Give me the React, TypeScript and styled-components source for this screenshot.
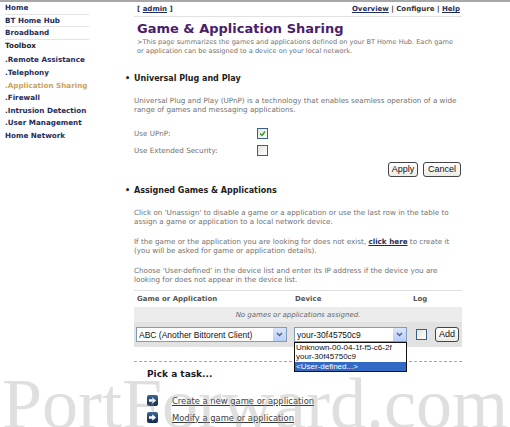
import React from 'react';
import styled, { createGlobalStyle } from 'styled-components';

const GlobalStyle = createGlobalStyle`
  html, body {
    margin: 0;
    padding: 0;
    background: #fff;
  }
  body {
    font-family: "DejaVu Sans", Verdana, sans-serif;
  }
`;

const Page = styled.div`
  position: relative;
  width: 510px;
  height: 427px;
  overflow: hidden;
  border-top: 2px solid #a8a8a8;
  box-sizing: border-box;
  display: flex;
  align-items: flex-start;
`;

const Sidebar = styled.nav`
  width: 84px;
  margin-left: 5px;
  display: flex;
  flex-direction: column;
`;

const NavItem = styled.a<{ $tone?: 'nav' | 'head' | 'active'; $line?: boolean; $gap?: number }>`
  display: block;
  height: 12.6px;
  line-height: 11px;
  margin-top: ${(p) => p.$gap ?? 0}px;
  font-size: 7.2px;
  font-weight: bold;
  white-space: nowrap;
  text-decoration: none;
  color: ${(p) => (p.$tone === 'active' ? '#c9a45c' : p.$tone === 'head' ? '#1c1c1c' : '#1f2d5c')};
  border-bottom: 1px solid ${(p) => (p.$line ? '#e4e4e4' : 'transparent')};
  box-sizing: border-box;
`;

const Main = styled.main`
  width: 328px;
  margin-left: 45px;
  display: flex;
  flex-direction: column;
`;

const TopBar = styled.div`
  height: 14px;
  display: flex;
  justify-content: space-between;
  align-items: center;
  padding: 0 2px 0 3px;
  border-bottom: 1px solid #e2e2e2;
  font-size: 7px;
  font-weight: bold;
  color: #333;
`;

const TopLink = styled.a`
  color: #1f2d5c;
  text-decoration: underline;
`;

const Title = styled.h1`
  margin: 3px 0 0 3px;
  font-size: 13px;
  line-height: 17px;
  font-weight: bold;
  color: #4b1c6c;
`;

const Text = styled.p<{ $top?: number; $indent?: number; $size?: number }>`
  margin: ${(p) => p.$top ?? 0}px 0 0 ${(p) => p.$indent ?? 0}px;
  font-size: ${(p) => p.$size ?? 7.2}px;
  line-height: 9px;
  color: #707070;
`;

const InlineLink = styled.a`
  color: #1f2d5c;
  font-weight: bold;
  text-decoration: underline;
`;

const SectionTitle = styled.h2<{ $top: number }>`
  margin: ${(p) => p.$top}px 0 0 0;
  display: flex;
  align-items: center;
  font-size: 8px;
  line-height: 10px;
  font-weight: bold;
  color: #222;
`;

const Bullet = styled.span`
  width: 9px;
  margin-left: -9px;
  font-size: 8px;
`;

const Form = styled.div`
  margin-top: 11px;
`;

const FormRow = styled.div`
  height: 17px;
  display: grid;
  grid-template-columns: 123px 1fr;
  align-items: center;
  font-size: 7.2px;
  color: #707070;
`;

const Check = styled.span`
  width: 9px;
  height: 9px;
  border: 1px solid #3a5f8a;
  background: linear-gradient(135deg, #e4e4dc, #fff);
  display: inline-flex;
  align-items: center;
  justify-content: center;
`;

const ButtonRow = styled.div<{ $top?: number }>`
  margin-top: ${(p) => p.$top ?? 0}px;
  display: flex;
  justify-content: flex-end;
  gap: 5px;
  padding-right: 1px;
`;

const Button = styled.button<{ $w: number }>`
  width: ${(p) => p.$w}px;
  height: 15px;
  padding: 0;
  border: 1px solid #444;
  border-radius: 3px;
  background: linear-gradient(#fff, #ecebe6);
  font-family: "Liberation Sans", Arial, sans-serif;
  font-size: 9px;
  color: #111;
  line-height: 13px;
`;

const Table = styled.div`
  margin-top: 6px;
  border-top: 1px solid #e0e0e0;
  display: grid;
  grid-template-columns: 158px 118px 1fr;
`;

const HeadCell = styled.div`
  height: 16px;
  display: flex;
  align-items: center;
  padding-left: 3px;
  font-size: 7px;
  font-weight: bold;
  color: #555;
`;

const EmptyRow = styled.div`
  grid-column: 1 / -1;
  height: 15px;
  background: #ececec;
  display: flex;
  align-items: center;
  justify-content: center;
  font-size: 7px;
  font-style: italic;
  color: #666;
`;

const InputCell = styled.div<{ $pad?: number }>`
  height: 25px;
  background: #e2e2e2;
  display: flex;
  align-items: center;
  padding-left: ${(p) => p.$pad ?? 2}px;
  gap: 8px;
`;

const SelectBox = styled.div<{ $w: number }>`
  width: ${(p) => p.$w}px;
  height: 15px;
  box-sizing: border-box;
  border: 1px solid #7f9db9;
  background: #fff;
  display: flex;
  align-items: center;
  justify-content: space-between;
  font-family: "Liberation Sans", Arial, sans-serif;
  font-size: 8.5px;
  color: #111;
  padding-left: 2px;
  position: relative;
`;

const Arrow = styled.span`
  width: 13px;
  height: 13px;
  background: linear-gradient(#dbe6fd, #b9cdf8);
  border-left: 1px solid #fff;
  display: flex;
  align-items: center;
  justify-content: center;
`;

const DropList = styled.ul`
  position: absolute;
  top: 14px;
  left: -1px;
  width: 113px;
  margin: 0;
  padding: 0;
  list-style: none;
  background: #fff;
  border: 1px solid #111;
  box-sizing: border-box;
  z-index: 2;
`;

const DropItem = styled.li<{ $sel?: boolean }>`
  height: 9.3px;
  line-height: 9px;
  padding-left: 1px;
  font-size: 8px;
  white-space: nowrap;
  background: ${(p) => (p.$sel ? '#316ac5' : '#fff')};
  color: ${(p) => (p.$sel ? '#fff' : '#111')};
`;

const Divider = styled.hr`
  margin: 14px 0 0 0;
  border: none;
  border-top: 1px dashed #a8a8a8;
  height: 0;
`;

const TaskTitle = styled.h3`
  margin: 6px 0 0 13px;
  font-size: 9px;
  line-height: 12px;
  font-weight: bold;
  color: #1a1a2a;
`;

const TaskList = styled.div`
  margin: 15px 0 0 13px;
  display: flex;
  flex-direction: column;
  gap: 6px;
`;

const Task = styled.a`
  display: flex;
  align-items: center;
  gap: 14px;
  height: 11px;
  font-size: 8.4px;
  color: #3a3a3a;
  text-decoration: underline;
`;

const Watermark = styled.div`
  position: absolute;
  left: 2px;
  top: 366px;
  font-family: "Liberation Serif", "Times New Roman", serif;
  font-size: 72px;
  line-height: 72px;
  white-space: nowrap;
  color: rgba(150, 150, 150, 0.3);
  pointer-events: none;
  z-index: 3;
`;

const Chevron = () => (
  <svg width="7" height="5" viewBox="0 0 7 5">
    <path d="M1 1 L3.5 3.5 L6 1" fill="none" stroke="#4d6185" strokeWidth="1.4" />
  </svg>
);

const Tick = () => (
  <svg width="7" height="7" viewBox="0 0 7 7">
    <path d="M1 3.5 L3 5.5 L6 1.5" fill="none" stroke="#21a121" strokeWidth="1.4" />
  </svg>
);

const GoIcon = () => (
  <svg width="11" height="11" viewBox="0 0 11 11">
    <defs>
      <linearGradient id="go" x1="0" y1="0" x2="0" y2="1">
        <stop offset="0" stopColor="#3d6795" />
        <stop offset="1" stopColor="#102a4e" />
      </linearGradient>
    </defs>
    <rect x="0" y="0" width="11" height="11" rx="2" fill="url(#go)" />
    <path d="M2 4.3 H5.3 V2.3 L9 5.5 L5.3 8.7 V6.7 H2 Z" fill="#fff" />
  </svg>
);

const navItems = [
  { label: 'Home', line: true },
  { label: 'BT Home Hub', line: true },
  { label: 'Broadband', line: true },
  { label: 'Toolbox', tone: 'head' as const },
  { label: '.Remote Assistance', gap: 2 },
  { label: '.Telephony' },
  { label: '.Application Sharing', tone: 'active' as const },
  { label: '.Firewall' },
  { label: '.Intrusion Detection' },
  { label: '.User Management' },
  { label: 'Home Network' },
];

export default function App() {
  return (
    <>
      <GlobalStyle />
      <Page>
        <Sidebar>
          {navItems.map((n) => (
            <NavItem key={n.label} $tone={n.tone ?? 'nav'} $line={n.line} $gap={n.gap}>
              {n.label}
            </NavItem>
          ))}
        </Sidebar>
        <Main>
          <TopBar>
            <span>
              [ <TopLink>admin</TopLink> ]
            </span>
            <span>
              <TopLink>Overview</TopLink> | Configure | <TopLink>Help</TopLink>
            </span>
          </TopBar>
          <Title>Game &amp; Application Sharing</Title>
          <Text $top={1} $indent={3} $size={6.6}>
            &gt;This page summarizes the games and applications defined on your BT Home Hub. Each game
            <br />
            or application can be assigned to a device on your local network.
          </Text>

          <SectionTitle $top={18}>
            <Bullet>•</Bullet>Universal Plug and Play
          </SectionTitle>
          <Text $top={12}>
            Universal Plug and Play (UPnP) is a technology that enables seamless operation of a wide
            range of games and messaging applications.
          </Text>
          <Form>
            <FormRow>
              <span>Use UPnP:</span>
              <Check>
                <Tick />
              </Check>
            </FormRow>
            <FormRow>
              <span>Use Extended Security:</span>
              <Check />
            </FormRow>
          </Form>
          <ButtonRow $top={3}>
            <Button $w={30}>Apply</Button>
            <Button $w={38}>Cancel</Button>
          </ButtonRow>

          <SectionTitle $top={9}>
            <Bullet>•</Bullet>Assigned Games &amp; Applications
          </SectionTitle>
          <Text $top={12}>
            Click on 'Unassign' to disable a game or a application or use the last row in the table to
            assign a game or application to a local network device.
          </Text>
          <Text $top={11}>
            If the game or the application you are looking for does not exist, <InlineLink>click here</InlineLink> to
            create it (you will be asked for game or application details).
          </Text>
          <Text $top={11}>
            Choose 'User-defined' in the device list and enter its IP address if the device you are
            looking for does not appear in the device list.
          </Text>

          <Table>
            <HeadCell>Game or Application</HeadCell>
            <HeadCell>Device</HeadCell>
            <HeadCell>Log</HeadCell>
            <EmptyRow>No games or applications assigned.</EmptyRow>
            <InputCell>
              <SelectBox $w={151}>
                ABC (Another Bittorent Client)
                <Arrow>
                  <Chevron />
                </Arrow>
              </SelectBox>
            </InputCell>
            <InputCell>
              <SelectBox $w={113}>
                your-30f45750c9
                <Arrow>
                  <Chevron />
                </Arrow>
                <DropList>
                  <DropItem>Unknown-00-04-1f-f5-c6-2f</DropItem>
                  <DropItem>your-30f45750c9</DropItem>
                  <DropItem $sel>&lt;User-defined...&gt;</DropItem>
                </DropList>
              </SelectBox>
            </InputCell>
            <InputCell $pad={6}>
              <Check />
              <Button $w={24}>Add</Button>
            </InputCell>
          </Table>

          <Divider />
          <TaskTitle>Pick a task...</TaskTitle>
          <TaskList>
            <Task>
              <GoIcon />
              Create a new game or application
            </Task>
            <Task>
              <GoIcon />
              Modify a game or application
            </Task>
          </TaskList>
        </Main>
        <Watermark>PortForward.com</Watermark>
      </Page>
    </>
  );
}
